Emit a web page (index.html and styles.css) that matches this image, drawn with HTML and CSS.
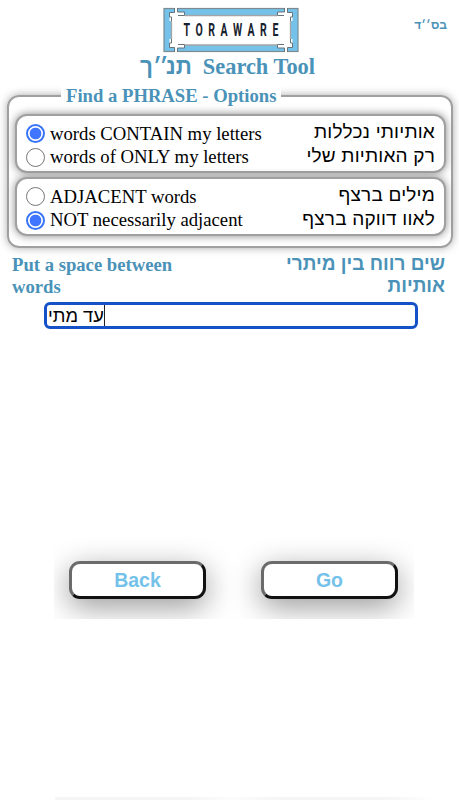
FILE: index.html
```html
<!DOCTYPE html>
<html lang="en">

<head>
    <meta charset="UTF-8">
    <meta name="viewport" content="width=device-width, initial-scale=1.0">
    <title>Toraware Search Tool</title>
    <link rel="stylesheet" href="styles.css">
</head>

<body>
    <header>
        <svg class="logo" width="136" height="46" viewBox="0 0 136 46">
            <rect x="1" y="1.5" width="134" height="43" fill="#74c2ea" stroke="#7d8a92" stroke-width="1.2"/>
            <path d="M8.500 8.500H127.500V38H8.500Z" fill="#fff"/>
            <path d="M22 8.500H114M22 38H114M8.500 14V32M127.500 14V32" fill="none" stroke="#a5a5a5" stroke-width="1.3"/>
            <g id="corner">
                <path d="M11.500 0H14.500V5H21.500V9H15V14H6.500V5.500H11.500Z" fill="#fff"/>
                <path d="M14.500 1V5H21.500V8.500H15M11.500 1V5.500H6.500V10H8.500V14" fill="none" stroke="#66737b" stroke-width="1"/>
            </g>
            <use href="#corner" transform="translate(136 0) scale(-1 1)"/>
            <use href="#corner" transform="translate(0 46) scale(1 -1)"/>
            <use href="#corner" transform="translate(136 46) scale(-1 -1)"/>
            <g class="logo-text" transform="translate(20.5 29) scale(.6 1)">
                <text x="0" y="0" textLength="158">TORAWARE</text>
            </g>
        </svg>
        <span class="bsd" lang="he" dir="rtl">בס׳׳ד</span>
    </header>
    <h1><span class="he" lang="he" dir="rtl">תנ<span class="geresh">׳׳</span>ך</span><span class="title-en">Search Tool</span></h1>

    <form id="search-form">
        <fieldset class="options">
            <legend><span class="legend-text">Find a PHRASE - Options</span></legend>
            <div class="group">
                <label class="option">
                    <input type="radio" name="letters" checked>
                    <span class="en">words CONTAIN my letters</span>
                    <span class="he" lang="he" dir="rtl">אותיותי נכללות</span>
                </label>
                <label class="option">
                    <input type="radio" name="letters">
                    <span class="en">words of ONLY my letters</span>
                    <span class="he" lang="he" dir="rtl">רק האותיות שלי</span>
                </label>
            </div>
            <div class="group">
                <label class="option">
                    <input type="radio" name="adjacent">
                    <span class="en">ADJACENT words</span>
                    <span class="he" lang="he" dir="rtl">מילים ברצף</span>
                </label>
                <label class="option">
                    <input type="radio" name="adjacent" checked>
                    <span class="en">NOT necessarily adjacent</span>
                    <span class="he" lang="he" dir="rtl">לאוו דווקה ברצף</span>
                </label>
            </div>
        </fieldset>

        <div class="hint">
            <p class="hint-en">Put a space between words</p>
            <p class="hint-he he" lang="he" dir="rtl">שים רווח בין מיתרי אותיות</p>
        </div>

        <div class="phrase he" role="textbox" contenteditable="true"><span class="typed" lang="he">עד מתי</span></div>

        <div class="buttons">
            <button type="button">Back</button>
            <button type="button">Go</button>
        </div>
    </form>
    <div class="footer-edge"></div>
</body>

</html>
```
FILE: styles.css
```css
* {
    box-sizing: border-box;
}

body {
    margin: 0;
    height: 800px;
    display: flex;
    flex-direction: column;
    overflow: hidden;
    background-color: #fff;
    font-family: "Liberation Serif", serif;
    color: #000;
}

.he,
.bsd {
    font-family: "Liberation Sans", sans-serif;
}

header {
    position: relative;
    height: 53px;
    padding-top: 7px;
    display: flex;
    justify-content: center;
}

.logo {
    margin-left: 3px;
}

.logo-text {
    font: bold 17.5px Roboto, sans-serif;
    fill: #17222e;
}

.bsd {
    position: absolute;
    top: 18px;
    right: 12px;
    font-size: 12px;
    font-weight: bold;
    color: #4a92b8;
}

h1 {
    display: flex;
    justify-content: center;
    gap: 11px;
    height: 27px;
    margin: 0;
    padding-right: 4px;
    font-size: 22.4px;
    line-height: 27px;
    color: #4a92b8;
    white-space: nowrap;
}

.geresh {
    letter-spacing: -2.5px;
}

form {
    display: flex;
    flex-direction: column;
}

.options {
    height: 163px;
    margin: 5px 6px 0 7px;
    padding: 7px 5px 0 6px;
    border: 2px solid #a0a0a0;
    border-radius: 12px;
    box-shadow: 0 0 8px #aaa;
}

legend {
    height: 22px;
    margin-left: 46px;
    padding: 0 5px;
    background-color: #fff;
    font-size: 18.67px;
    font-weight: bold;
    line-height: 22px;
    color: #4a92b8;
}

.group {
    height: 59px;
    margin-bottom: 4px;
    padding: 6px 9px 0;
    border: 2px solid #a0a0a0;
    border-radius: 12px;
    background-color: #fff;
    box-shadow: 0 0 8px #888;
}

.option {
    display: flex;
    height: 23.5px;
    align-items: center;
    font-size: 18.7px;
    white-space: nowrap;
}

.option input {
    appearance: none;
    flex: none;
    width: 19px;
    height: 19px;
    margin: 0 5px 0 0;
    border: 1.5px solid #777;
    border-radius: 50%;
    background-color: #fff;
}

.option input:checked {
    border: 2px solid #3875f6;
    background: radial-gradient(circle, #3f75ff 5.5px, #fff 6.2px);
}

.option .he {
    margin-left: auto;
    font-size: 19px;
    letter-spacing: 0.2px;
    line-height: 19px;
    padding-bottom: 4px;
}

.hint {
    display: flex;
    justify-content: space-between;
    height: 44px;
    margin: 6px 14px 0 12px;
    font-size: 18.67px;
    font-weight: bold;
    line-height: 22px;
    color: #4a92b8;
}

.hint p {
    width: 180px;
    margin: 0;
}

.hint .hint-he {
    margin-top: -1px;
    font-size: 19px;
}

.phrase {
    width: 374px;
    height: 27px;
    margin: 4px 0 0 44px;
    border: 3px solid #1552c8;
    border-radius: 6px;
    font-size: 18.3px;
    line-height: 22px;
    outline: none;
}

.typed {
    display: inline-block;
    height: 21px;
    padding-left: 1px;
    border-right: 1px solid #222;
}

/* clips the button shadows */
.buttons {
    display: flex;
    gap: 55px;
    width: 360px;
    height: 98px;
    margin: 192px 0 0 54px;
    padding: 40px 15px 0;
    overflow: hidden;
}

button {
    width: 137px;
    height: 38px;
    padding: 0;
    border: 3px solid;
    border-color: #6b6b6b #111 #111 #6b6b6b;
    border-radius: 11px;
    background-color: #fff;
    box-shadow: 0 8px 30px rgba(0, 0, 0, 0.4);
    font: bold 19.5px "Liberation Sans", sans-serif;
    color: #74c2ea;
}

.footer-edge {
    width: 380px;
    height: 3px;
    margin: auto 0 0 55px;
    background: linear-gradient(to right, #f5f5f5, #f5f5f5 35%, #fcfcfc 47%, #f5f5f5 60%, #f5f5f5 87%, #fff);
}
```
